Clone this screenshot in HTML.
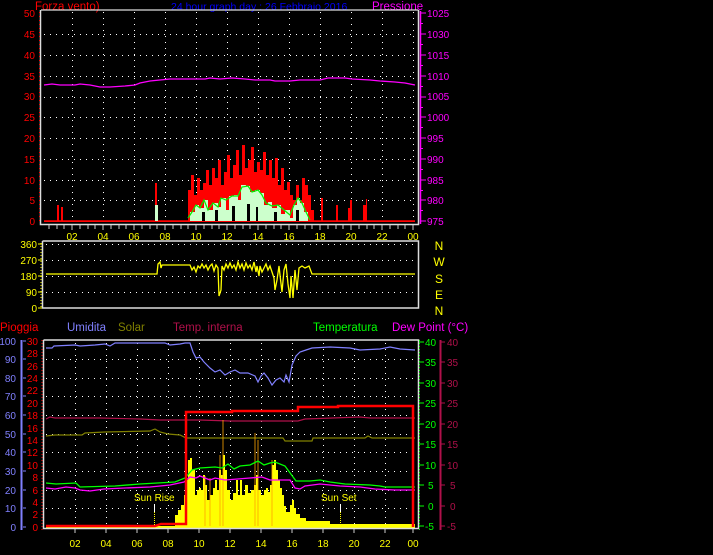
<!DOCTYPE html>
<html><head><meta charset="utf-8"><style>
html,body{margin:0;padding:0;background:#000;width:713px;height:555px;overflow:hidden}
svg{display:block}
text{font-family:"Liberation Sans",sans-serif}
</style></head><body>
<svg width="713" height="555" viewBox="0 0 713 555" xmlns="http://www.w3.org/2000/svg">
<rect width="713" height="555" fill="#000"/>

<!-- ===== TOP PLOT ===== -->
<text x="35" y="10" font-size="11.5" fill="#ff0000">Forza vento)</text>
<text x="171" y="10" font-size="10.5" fill="#0000ff">24 hour graph day : 26 Febbraio 2016</text>
<text x="372" y="10" font-size="11.5" fill="#ff00ff">Pressione</text>

<g stroke="#fff" stroke-width="1" stroke-dasharray="1 5" fill="none">
<path d="M44 34.5H416M44 55.5H416M44 76.5H416M44 97.5H416M44 117.5H416M44 138.5H416M44 159.5H416M44 180.5H416M44 200.5H416"/>
<path d="M72.5 12V220M103.5 12V220M134.5 12V220M165.5 12V220M196.5 12V220M227.5 12V220M258.5 12V220M289.5 12V220M320.5 12V220M351.5 12V220M382.5 12V220M413.5 12V220"/>
</g>
<!-- pressure -->
<polyline fill="none" stroke="#ff00ff" stroke-width="1.3" points="44,85 52,84 60,85 75,85 80,84 90,85 100,87 110,87 125,86 135,85 140,83 150,81 160,80 170,79 175,79 205,79 210,78 220,79 232,78 245,79 255,80 270,80 275,81 290,81 300,80 320,80 328,78 345,78 352,79 370,80 380,81 395,82 405,83 415,85"/>
<!-- wind red -->
<path fill="#ff0000" d="M44 221H57V205H59V221H61V207H63V221H155V183H157V210H158V221H188V190H191V175H194V195H197V178H200V190H203V183H206V170H209V185H212V168H215V178H218V160H221V185H224V172H227V155H230V178H233V165H236V150H239V175H242V145H245V168H248V160H251V147H254V172H257V162H260V170H263V152H266V175H269V160H272V178H275V158H278V185H281V168H284V190H287V182H290V195H293V200H296V185H299V200H302V178H305V185H308V195H311V210H314V221H321V198H323V221H336V205H338V221H348V208H350V200H352V221H363V205H366V199H367V221H415V222H44Z"/>
<path d="M44 221H415" stroke="#ff0000" stroke-width="1.5"/>
<!-- light green gust -->
<path fill="#ccffcc" d="M155 221V205H158V221H190V212H195V205H199V208H204V200H208V210H213V203H218V207H221V198H226V210H229V196H234V195H238V200H241V185H246V186H250V192H255V190H260V193H264V205H268V202H272V208H277V205H281V214H285V210H290V218H293V205H297V198H300V203H304V212H308V221Z"/>
<polyline fill="none" stroke="#00ee00" stroke-width="1.2" points="188,218 192,212 196,205 200,208 204,200 208,210 213,203 218,207 221,198 226,200 232,196 238,196 242,187 248,186 252,192 258,190 262,195 266,203 272,206 278,205 284,210 290,215 294,205 298,198 302,203 306,212 310,220"/>
<g fill="#000"><rect x="202" y="212" width="3" height="9"/><rect x="215" y="210" width="3" height="11"/><rect x="232" y="206" width="3" height="15"/><rect x="247" y="204" width="3" height="17"/><rect x="256" y="207" width="2" height="14"/><rect x="274" y="212" width="3" height="9"/><rect x="296" y="210" width="3" height="11"/></g>

<path d="M40.5 10V224.5H418.5V10" stroke="#ddd" stroke-width="1.5" fill="none"/>
<path d="M41 10H418" stroke="#ddd" stroke-width="1.2"/>
<path d="M39.5 12V222" stroke="#ff0000" stroke-width="1" stroke-dasharray="1 3"/>
<g font-size="10" fill="#ff0000" text-anchor="end">
<text x="35" y="17">50</text><text x="35" y="38">45</text><text x="35" y="59">40</text><text x="35" y="80">35</text><text x="35" y="100">30</text><text x="35" y="121">25</text><text x="35" y="142">20</text><text x="35" y="163">15</text><text x="35" y="184">10</text><text x="35" y="204">5</text><text x="35" y="225">0</text>
</g>
<path d="M420.5 11V224" stroke="#ff00ff" stroke-width="1.5"/>
<path d="M420 13H426M420 34H426M420 55H426M420 76H426M420 97H426M420 117H426M420 138H426M420 159H426M420 180H426M420 200H426M420 221H426" stroke="#ff00ff" stroke-width="1"/>
<path d="M420 23.5H423M420 44.5H423M420 65.5H423M420 86.5H423M420 107.5H423M420 127.5H423M420 148.5H423M420 169.5H423M420 190.5H423M420 210.5H423" stroke="#ff00ff"/>
<g font-size="10" fill="#ff00ff">
<text x="427" y="17">1025</text><text x="427" y="38">1030</text><text x="427" y="59">1015</text><text x="427" y="80">1010</text><text x="427" y="100">1005</text><text x="427" y="121">1000</text><text x="427" y="142">995</text><text x="427" y="163">990</text><text x="427" y="184">985</text><text x="427" y="204">980</text><text x="427" y="225">975</text>
</g>
<path d="M49 225v4M57 225v4M64 225v4M80 225v4M88 225v4M95 225v4M111 225v4M119 225v4M126 225v4M142 225v4M150 225v4M157 225v4M173 225v4M181 225v4M188 225v4M204 225v4M212 225v4M219 225v4M235 225v4M243 225v4M250 225v4M266 225v4M274 225v4M281 225v4M297 225v4M305 225v4M312 225v4M328 225v4M336 225v4M343 225v4M359 225v4M367 225v4M374 225v4M390 225v4M398 225v4M405 225v4M72 225v5M103 225v5M134 225v5M165 225v5M196 225v5M227 225v5M258 225v5M289 225v5M320 225v5M351 225v5M382 225v5M413 225v5" stroke="#ccc"/>
<g font-size="10" fill="#ffff00" text-anchor="middle">
<text x="72" y="240">02</text><text x="103" y="240">04</text><text x="134" y="240">06</text><text x="165" y="240">08</text><text x="196" y="240">10</text><text x="227" y="240">12</text><text x="258" y="240">14</text><text x="289" y="240">16</text><text x="320" y="240">18</text><text x="351" y="240">20</text><text x="382" y="240">22</text><text x="413" y="240">00</text>
</g>

<!-- ===== WIND DIRECTION ===== -->
<g stroke="#fff" stroke-dasharray="1 5" fill="none">
<path d="M46 244.5H416M46 260.5H416M46 276.5H416M46 292.5H416"/>
</g>
<polyline fill="none" stroke="#ffff00" stroke-width="1.3" points="46,274 157,274 158,264 160,262 161,268 162,265 190,265 192,270 194,267 196,272 198,266 200,268 202,264 204,268 206,265 208,270 210,266 212,264 214,271 216,265 218,268 219,296 221,290 222,266 224,270 226,264 228,268 230,263 232,268 234,265 236,270 238,262 240,268 242,264 244,270 246,263 248,268 250,265 252,270 254,262 256,272 257,266 259,276 260,266 262,272 264,268 266,264 268,270 270,266 272,272 274,278 275,290 277,280 279,266 280,275 282,292 284,270 286,264 288,284 290,298 291,276 293,298 295,270 297,290 299,268 302,266 305,268 309,266 312,274 415,274"/>
<path d="M42.5 241V308H418.5V241H42.5" stroke="#ddd" stroke-width="1.5" fill="none"/>
<path d="M41 243V308" stroke="#ffff00" stroke-dasharray="1 2"/>
<path d="M42 244H38M42 260H38M42 276H38M42 292H38M42 308H38" stroke="#ffff00"/>
<g font-size="10" fill="#ffff00" text-anchor="end">
<text x="37" y="248">360</text><text x="37" y="264">270</text><text x="37" y="280">180</text><text x="37" y="296">90</text><text x="37" y="312">0</text>
</g>
<g font-size="12" fill="#ffff00" text-anchor="middle">
<text x="439" y="250">N</text><text x="439" y="266">W</text><text x="439" y="283">S</text><text x="439" y="299">E</text><text x="439" y="315">N</text>
</g>

<!-- ===== BOTTOM PLOT ===== -->
<g font-size="11.5">
<text x="0" y="331" fill="#ff0000">Pioggia</text>
<text x="67" y="331" fill="#8080ff">Umidita</text>
<text x="118" y="331" fill="#808000">Solar</text>
<text x="173" y="331" fill="#b0104a">Temp. interna</text>
<text x="313" y="331" fill="#00ff00">Temperatura</text>
<text x="392" y="331" fill="#ff00ff">Dew Point (°C)</text>
</g>
<g stroke="#fff" stroke-dasharray="1 5" fill="none">
<path d="M46 359.5H416M46 378.5H416M46 396.5H416M46 415.5H416M46 434.5H416M46 452.5H416M46 471.5H416M46 490.5H416M46 508.5H416"/>
<path d="M75.5 343V526M106.5 343V526M137.5 343V526M168.5 343V526M199.5 343V526M230.5 343V526M261.5 343V526M292.5 343V526M323.5 343V526M354.5 343V526M385.5 343V526"/>
</g>
<polyline fill="none" stroke="#8080ff" stroke-width="1.2" points="46,348 52,348 54,346 75,345 80,346 95,345 105,344 110,346 115,343 165,343 170,345 180,344 185,343 190,343 193,352 196,358 200,357 204,362 210,368 215,372 220,370 225,375 230,372 235,370 240,373 248,373 255,376 258,382 261,376 264,373 268,378 272,385 276,380 280,378 284,382 286,375 289,382 292,365 296,356 300,352 306,350 312,348 330,347 350,348 360,350 380,349 390,347 400,349 415,350"/>
<polyline fill="none" stroke="#b0104a" stroke-width="1.2" points="46,419 50,417 55,418 100,418 140,419 160,420 180,420 200,420 230,421 298,421 305,419 360,417 370,418 415,418"/>
<polyline fill="none" stroke="#808000" stroke-width="1.2" points="46,436 55,435 82,435 85,433 105,432 150,431 155,429 160,432 168,434 180,435 186,438 283,438 285,441 312,441 313,438 365,438 368,436 372,438 415,438"/>
<path fill="#ffff00" d="M46 526H175V515H178V510H181V505H184V495H186V480H188V460H190V458H192V470H195V495H197V490H199V488H201V490H203V475H205V485H207V500H210V495H213V488H215V480H217V490H219V470H221V475H223V455H225V470H227V490H230V500H233V493H236V480H238V495H240V480H242V495H245V485H248V493H251V490H254V485H256V475H258V490H261V495H264V490H266V488H268V492H270V485H272V465H274V460H276V470H278V480H280V488H282V495H284V506H286V512H288V512H290V505H292V500H294V508H296V514H300V518H306V521H330V524H415V528H46Z"/>
<path d="M205 476V526M210 478V526M220 455V526M223 420V526M255 433V526M258 440V526M272 460V526" stroke="#ffa500" stroke-width="0.8"/>
<polyline fill="none" stroke="#00ff00" stroke-width="1.3" points="46,483 56,484 76,483 80,487 115,486 140,484 175,482 185,478 192,470 200,468 215,467 222,468 228,464 234,469 240,466 250,465 258,461 264,465 270,463 275,462 285,466 296,481 310,481 320,480 330,482 345,484 370,485 380,486 385,487 415,487"/>
<polyline fill="none" stroke="#ff00ff" stroke-width="1.3" points="46,488 55,489 66,487 75,488 80,490 90,491 104,489 125,488 150,487 170,485 184,482 190,477 196,478 200,476 210,480 215,478 225,480 250,478 262,477 270,480 290,480 295,488 300,489 305,486 320,484 340,486 360,487 375,489 395,490 415,490"/>
<polyline fill="none" stroke="#ff0000" stroke-width="2.5" points="46,526 155,526 161,524 186,524 186,412 232,412 232,411 298,411 298,407 338,407 338,406 413,406 413,527"/>
<text x="134" y="501" font-size="10" fill="#ffff00">Sun Rise</text>
<text x="321" y="501" font-size="10" fill="#ffff00">Sun Set</text>
<path d="M154.5 504V512M340.5 504V512" stroke="#fff"/>
<path d="M154.5 512V526M340.5 512V526" stroke="#ffff00" stroke-dasharray="1 1"/>

<path d="M43.5 340V528.5H418.5V340H43.5" stroke="#ddd" stroke-width="1.5" fill="none"/>
<path d="M21.5 340V530" stroke="#8080ff" stroke-width="2"/>
<g font-size="10" fill="#8080ff" text-anchor="end">
<text x="16" y="345">100</text><text x="16" y="363">90</text><text x="16" y="382">80</text><text x="16" y="400">70</text><text x="16" y="419">60</text><text x="16" y="438">50</text><text x="16" y="456">40</text><text x="16" y="475">30</text><text x="16" y="494">20</text><text x="16" y="512">10</text><text x="16" y="531">0</text>
</g>
<path d="M23 341H26M23 359H26M23 378H26M23 396H26M23 415H26M23 434H26M23 452H26M23 471H26M23 490H26M23 508H26M23 527H26" stroke="#8080ff"/>
<path d="M42 340V530" stroke="#ff0000" stroke-dasharray="1 2"/>
<g font-size="10" fill="#ff0000" text-anchor="end">
<text x="38" y="345">30</text><text x="38" y="357">28</text><text x="38" y="370">26</text><text x="38" y="382">24</text><text x="38" y="394">22</text><text x="38" y="407">20</text><text x="38" y="419">18</text><text x="38" y="432">16</text><text x="38" y="444">14</text><text x="38" y="456">12</text><text x="38" y="469">10</text><text x="38" y="481">8</text><text x="38" y="494">6</text><text x="38" y="506">4</text><text x="38" y="518">2</text><text x="38" y="531">0</text>
</g>
<path d="M419.5 340V530" stroke="#00ff00" stroke-dasharray="1 2"/>
<g font-size="10" fill="#00ff00">
<text x="425" y="346">40</text><text x="425" y="366">35</text><text x="425" y="387">30</text><text x="425" y="407">25</text><text x="425" y="428">20</text><text x="425" y="448">15</text><text x="425" y="469">10</text><text x="428" y="489">5</text><text x="428" y="510">0</text><text x="425" y="530">-5</text>
</g>
<path d="M419 342H424M419 362H424M419 383H424M419 403H424M419 424H424M419 444H424M419 465H424M419 485H424M419 506H424M419 526H424" stroke="#00ff00"/>
<path d="M440.5 340V530" stroke="#b0104a" stroke-width="2"/>
<g font-size="10" fill="#b0104a">
<text x="447" y="346">40</text><text x="447" y="366">35</text><text x="447" y="387">30</text><text x="447" y="407">25</text><text x="447" y="428">20</text><text x="447" y="448">15</text><text x="447" y="469">10</text><text x="450" y="489">5</text><text x="450" y="510">0</text><text x="447" y="530">-5</text>
</g>
<path d="M441 342H445M441 362H445M441 383H445M441 403H445M441 424H445M441 444H445M441 465H445M441 485H445M441 506H445M441 526H445" stroke="#b0104a"/>
<path d="M75 529v4M106 529v4M137 529v4M168 529v4M199 529v4M230 529v4M261 529v4M292 529v4M323 529v4M354 529v4M385 529v4M413 529v4" stroke="#ccc"/>
<g font-size="10" fill="#ffff00" text-anchor="middle">
<text x="75" y="547">02</text><text x="106" y="547">04</text><text x="137" y="547">06</text><text x="168" y="547">08</text><text x="199" y="547">10</text><text x="230" y="547">12</text><text x="261" y="547">14</text><text x="292" y="547">16</text><text x="323" y="547">18</text><text x="354" y="547">20</text><text x="385" y="547">22</text><text x="413" y="547">00</text>
</g>
</svg>
</body></html>
